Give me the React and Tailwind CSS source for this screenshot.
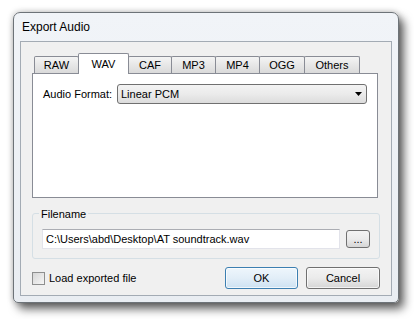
import React from 'react'

const tabs = [
  { label: 'RAW', w: 'w-[45px]' },
  { label: 'WAV', w: 'w-[51px]', active: true },
  { label: 'CAF', w: 'w-[44px]' },
  { label: 'MP3', w: 'w-[45px]' },
  { label: 'MP4', w: 'w-[45px]' },
  { label: 'OGG', w: 'w-[46px]' },
  { label: 'Others', w: 'w-[56px]' },
]

function Tab({ label, w, active, first }) {
  if (active) {
    return (
      <div
        className={`${w} h-[21px] -ml-px -mb-px relative z-10 flex items-start justify-center pt-[2px] bg-white border border-b-0 border-[#898c95] rounded-t-[2px]`}
      >
        {label}
      </div>
    )
  }
  return (
    <div
      className={`${w} h-[17px] ${first ? '' : '-ml-px'} flex items-center justify-center bg-gradient-to-b from-[#f4f4f4] to-[#dadada] border border-b-0 border-[#898c95] rounded-t-[2px]`}
    >
      {label}
    </div>
  )
}

export default function App() {
  return (
    <div className="w-[414px] h-[319px] bg-white pt-[12px] pl-[13px] overflow-hidden">
      <div
        className="w-[386px] h-[291px] flex flex-col bg-gradient-to-b from-[#f1f4f8] to-[#e9edf2] border border-[#6d7378] rounded-t-[7px] rounded-b-[5px] shadow-[0_0_6px_rgba(0,0,0,0.25),5px_6px_10px_rgba(0,0,0,0.6)]"
        style={{ fontFamily: '"Liberation Sans", Arial, sans-serif' }}
      >
        <div className="h-[28px] flex items-center pl-[8px] text-[12px] text-black">
          Export Audio
        </div>
        <div className="mx-[6px] h-[255px] border border-[#a3abb4] bg-[#f0f0f0] text-[11px] text-black flex flex-col">
          {/* tabs */}
          <div className="ml-[11px] mt-[11px] w-[346px]">
            <div className="h-[20px] pl-[2px] flex items-end">
              {tabs.map((t, i) => (
                <Tab key={t.label} {...t} first={i === 0} />
              ))}
            </div>
            <div className="h-[125px] bg-white border border-[#898c95]">
              <div className="flex items-center pl-[10px] pr-[10px] pt-[10px]">
                <div className="w-[74px] shrink-0">Audio Format:</div>
                <div className="flex-1 h-[20px] flex items-center justify-between pl-[3px] pr-[4px] border border-[#707070] rounded-[3px] bg-gradient-to-b from-[#f3f3f3] via-[#ebebeb] to-[#dcdcdc]">
                  <span>Linear PCM</span>
                  <svg width="7" height="4" viewBox="0 0 7 4">
                    <path d="M0 0H7L3.5 4Z" fill="#000" />
                  </svg>
                </div>
              </div>
            </div>
          </div>

          {/* filename group */}
          <div className="relative ml-[11px] mt-[15px] w-[348px] h-[46px] border border-[#d5dfe5] rounded-[3px]">
            <span className="absolute left-[6px] -top-[8px] px-[2px] bg-[#f0f0f0]">Filename</span>
            <div className="flex items-start pl-[9px] pt-[15px]">
              <div className="w-[298px] h-[20px] flex items-center pl-[3px] bg-white border border-[#e2e3ea] border-t-[#abadb3]">
                C:\Users\abd\Desktop\AT soundtrack.wav
              </div>
              <div className="ml-[6px] mt-px w-[24px] h-[18px] flex items-end justify-center pb-[2px] leading-none border border-[#707070] rounded-[3px] bg-gradient-to-b from-[#f3f3f3] via-[#ebebeb] to-[#d6d6d6]">
                ...
              </div>
            </div>
          </div>

          {/* bottom row */}
          <div className="ml-[11px] mt-[8px] w-[348px] h-[22px] flex items-center">
            <div className="w-[13px] h-[13px] border border-[#8e8f8f] bg-gradient-to-br from-[#d6d6d6] to-[#f6f6f6]" />
            <span className="ml-[4px]">Load exported file</span>
            <div className="ml-auto flex gap-[8px]">
              <div className="w-[73px] h-[22px] flex items-center justify-center border border-[#3c7fb1] rounded-[3px] bg-gradient-to-b from-[#eef6fc] via-[#e2eef8] to-[#cde2f2] shadow-[inset_0_0_0_1px_rgba(255,255,255,0.7)]">
                OK
              </div>
              <div className="w-[74px] h-[22px] flex items-center justify-center border border-[#707070] rounded-[3px] bg-gradient-to-b from-[#f3f3f3] via-[#ebebeb] to-[#d6d6d6] shadow-[inset_0_0_0_1px_rgba(255,255,255,0.7)]">
                Cancel
              </div>
            </div>
          </div>
        </div>
      </div>
    </div>
  )
}
